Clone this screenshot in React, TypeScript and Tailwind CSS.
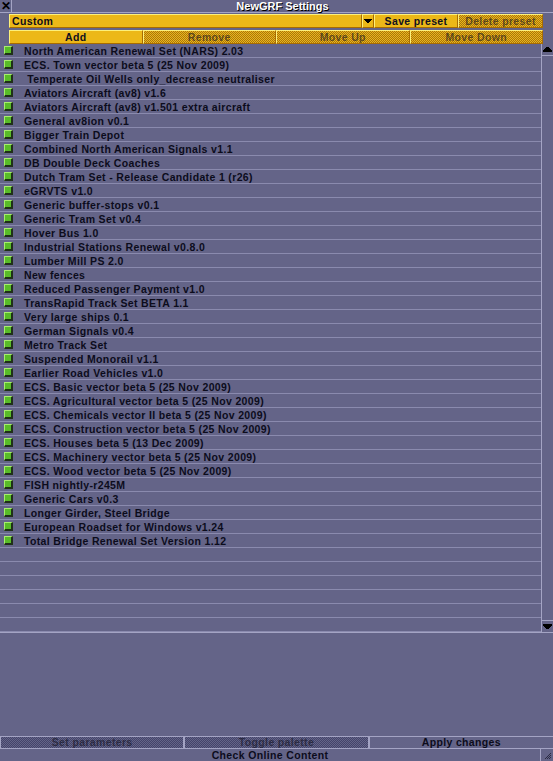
import React from "react"

const grfs = [
    "North American Renewal Set (NARS) 2.03",
    "ECS. Town vector beta 5 (25 Nov 2009)",
    " Temperate Oil Wells only_decrease neutraliser",
    "Aviators Aircraft (av8) v1.6",
    "Aviators Aircraft (av8) v1.501 extra aircraft",
    "General av8ion v0.1",
    "Bigger Train Depot",
    "Combined North American Signals v1.1",
    "DB Double Deck Coaches",
    "Dutch Tram Set - Release Candidate 1 (r26)",
    "eGRVTS v1.0",
    "Generic buffer-stops v0.1",
    "Generic Tram Set v0.4",
    "Hover Bus 1.0",
    "Industrial Stations Renewal v0.8.0",
    "Lumber Mill PS 2.0",
    "New fences",
    "Reduced Passenger Payment v1.0",
    "TransRapid Track Set BETA 1.1",
    "Very large ships 0.1",
    "German Signals v0.4",
    "Metro Track Set",
    "Suspended Monorail v1.1",
    "Earlier Road Vehicles v1.0",
    "ECS. Basic vector beta 5 (25 Nov 2009)",
    "ECS. Agricultural vector beta 5 (25 Nov 2009)",
    "ECS. Chemicals vector II beta 5 (25 Nov 2009)",
    "ECS. Construction vector beta 5 (25 Nov 2009)",
    "ECS. Houses beta 5 (13 Dec 2009)",
    "ECS. Machinery vector beta 5 (25 Nov 2009)",
    "ECS. Wood vector beta 5 (25 Nov 2009)",
    "FISH nightly-r245M",
    "Generic Cars v0.3",
    "Longer Girder, Steel Bridge",
    "European Roadset for Windows v1.24",
    "Total Bridge Renewal Set Version 1.12",
]

const TOTAL_ROWS = 42

const yellowBtn = "flex items-center justify-center bg-[#ecb818] border-t border-l border-t-[#fcf07c] border-l-[#fcf07c] border-b border-r border-b-[#a86c00] border-r-[#a86c00] text-[#101020]"
const yellowOff = "flex items-center justify-center bg-[image:repeating-conic-gradient(#a87410_0_25%,#ecb818_0_50%)] bg-[length:2px_2px] border-t border-l border-t-[#fcf07c] border-l-[#fcf07c] border-b border-r border-b-[#a86c00] border-r-[#a86c00] text-[#101020]/60"
const greyOff = "flex items-center justify-center bg-[image:repeating-conic-gradient(#44446a_0_25%,#646488_0_50%)] bg-[length:2px_2px] border-t border-l border-t-[#a4a4c4] border-l-[#a4a4c4] border-r border-r-[#a4a4c4] text-[#101020]/60"

export default function App() {
    const empty = TOTAL_ROWS - grfs.length
    return (
        <div className="w-[553px] h-[761px] bg-[#646488] flex flex-col overflow-hidden text-[#0c0c1c] font-bold text-[10.5px] tracking-[0.35px] leading-none font-['Liberation_Sans',Arial,sans-serif]">
            {/* title */}
            <div className="h-[13px] flex border-b border-[#a4a4c4] tracking-normal">
                <div className="w-[12px] flex items-center justify-center border-r border-[#a4a4c4] text-[#000] text-[12px]">✕</div>
                <div className="flex-1 flex items-center justify-center text-white text-[11px] [text-shadow:1px_1px_0_#000]">NewGRF Settings</div>
            </div>

            {/* presets + edit buttons */}
            <div className="h-[31px] pt-[1px] pl-[9px] pr-[10px] flex flex-col gap-[2px]">
                <div className="h-[14px] flex">
                    <div className="w-[353px] flex items-center pl-[2px] bg-[#ecb818] border-t border-l border-t-[#fcf07c] border-l-[#fcf07c] border-b border-r border-b-[#a86c00] border-r-[#a86c00]">Custom</div>
                    <div className={yellowBtn + " w-[12px]"}>
                        <svg width="8" height="5" viewBox="0 0 8 5"><path d="M0 0h8v1h-1v1h-1v1h-1v1h-2v-1h-1v-1h-1v-1h-1z" fill="#000" /></svg>
                    </div>
                    <div className={yellowBtn + " w-[84px]"}>Save preset</div>
                    <div className={yellowOff + " w-[85px]"}>Delete preset</div>
                </div>
                <div className="h-[14px] grid grid-cols-4">
                    <div className={yellowBtn}>Add</div>
                    <div className={yellowOff}>Remove</div>
                    <div className={yellowOff}>Move Up</div>
                    <div className={yellowOff}>Move Down</div>
                </div>
            </div>

            {/* list */}
            <div className="h-[589px] flex border-b border-[#a4a4c4]">
                <div className="flex-1 flex flex-col">
                    {grfs.map((name, i) => (
                        <div key={i} className="h-[14px] shrink-0 flex items-center border-b border-[#8a8aae]">
                            <div className="ml-[4px] w-[9px] h-[9px] bg-[#58bc28] border-t border-l border-[#a8ec70] border-b-2 border-r-2 border-b-[#203018] border-r-[#203018]" />
                            <span className="ml-[11px] pt-[1px] whitespace-pre">{name}</span>
                        </div>
                    ))}
                    {Array.from({ length: empty }).map((_, i) => (
                        <div key={"e" + i} className="h-[14px] shrink-0 border-b border-[#8a8aae]" />
                    ))}
                </div>
                <div className="w-[12px] flex flex-col border-l border-[#a4a4c4]">
                    <div className="h-[12px] flex items-center justify-center border-b border-[#a4a4c4]">
                        <svg width="9" height="5" viewBox="0 0 9 5"><path d="M3 0h3v1h1v1h1v1h1v2h-9v-2h1v-1h1v-1h1z" fill="#000" /></svg>
                    </div>
                    <div className="flex-1" />
                    <div className="h-[12px] flex items-center justify-center border-t border-[#a4a4c4]">
                        <svg width="9" height="5" viewBox="0 0 9 5"><path d="M0 0h9v2h-1v1h-1v1h-1v1h-3v-1h-1v-1h-1v-1h-1z" fill="#000" /></svg>
                    </div>
                </div>
            </div>

            <div className="flex-1" />

            {/* bottom buttons */}
            <div className="h-[13px] grid grid-cols-3 border-b border-[#a4a4c4]">
                <div className={greyOff}>Set parameters</div>
                <div className={greyOff}>Toggle palette</div>
                <div className="flex items-center justify-center border-t border-l border-[#a4a4c4]">Apply changes</div>
            </div>
            <div className="h-[12px] flex">
                <div className="flex-1 flex items-center justify-center border-r border-[#a4a4c4]">Check Online Content</div>
                <div className="w-[12px] flex items-end justify-end p-[1px]">
                    <svg width="8" height="8" viewBox="0 0 8 8">
                        <path d="M7 1L1 7M7 3L3 7M7 5L5 7" stroke="#2c2c44" strokeWidth="1" />
                    </svg>
                </div>
            </div>
        </div>
    )
}
